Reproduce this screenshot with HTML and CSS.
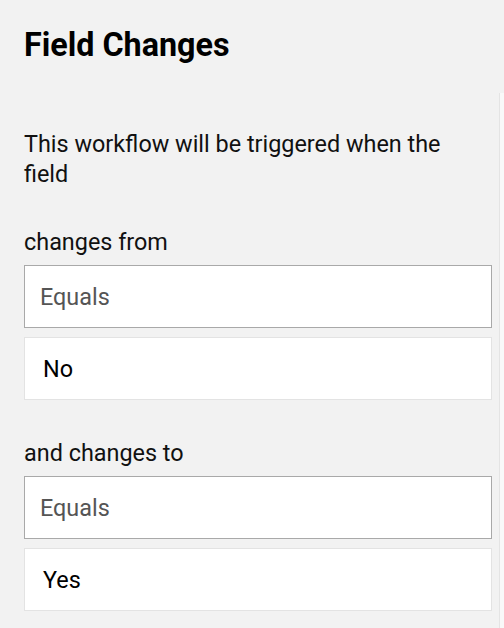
FILE: index.html
```html
<!DOCTYPE html>
<html lang="en">
<head>
<meta charset="utf-8">
<title>Field Changes</title>
<link rel="stylesheet" href="styles.css">
</head>
<body>
<div class="page">
  <header class="header">
    <h1 class="title">Field Changes</h1>
  </header>
  <div class="body-row">
    <main class="content">
      <p class="intro">This workflow will be triggered when the field</p>
      <section class="group">
        <div class="label">changes from</div>
        <div class="select">Equals</div>
        <div class="value">No</div>
      </section>
      <section class="group">
        <div class="label">and changes to</div>
        <div class="select">Equals</div>
        <div class="value">Yes</div>
      </section>
    </main>
    <div class="track"></div>
  </div>
</div>
</body>
</html>
```

FILE: styles.css
```css
html, body {
  margin: 0;
  padding: 0;
  height: 100%;
}
body {
  background: #f2f2f2;
  font-family: Roboto, "Liberation Sans", Arial, sans-serif;
  color: #111;
}
.page {
  display: flex;
  flex-direction: column;
  height: 628px;
  overflow: hidden;
}
.header {
  height: 93px;
  box-sizing: border-box;
  padding: 28px 24px 0;
}
.title {
  margin: 0;
  font-size: 32.3px;
  line-height: 34px;
  font-weight: 700;
  color: #000;
}
.body-row {
  flex: 1;
  display: flex;
}
.content {
  flex: 1;
  padding: 36px 7px 0 24px;
}
.track {
  width: 4px;
  border-left: 1px solid #e4e4e4;
  background: #f9f9f9;
}
.intro {
  margin: 0 0 1px;
  padding-right: 16px;
  font-size: 23.4px;
  line-height: 30px;
}
.group {
  margin-top: 38px;
}
.label {
  font-size: 23.4px;
  line-height: 30px;
  margin-bottom: 8px;
}
.select {
  height: 63px;
  box-sizing: border-box;
  border: 1px solid #a9a9a9;
  background: #fff;
  display: flex;
  align-items: center;
  padding: 0 15px;
  font-size: 23.4px;
  color: #555;
}
.value {
  margin-top: 9px;
  height: 63px;
  box-sizing: border-box;
  border: 1px solid #e3e3e3;
  background: #fff;
  display: flex;
  align-items: center;
  padding: 0 18px;
  font-size: 23.4px;
  color: #000;
}
```
